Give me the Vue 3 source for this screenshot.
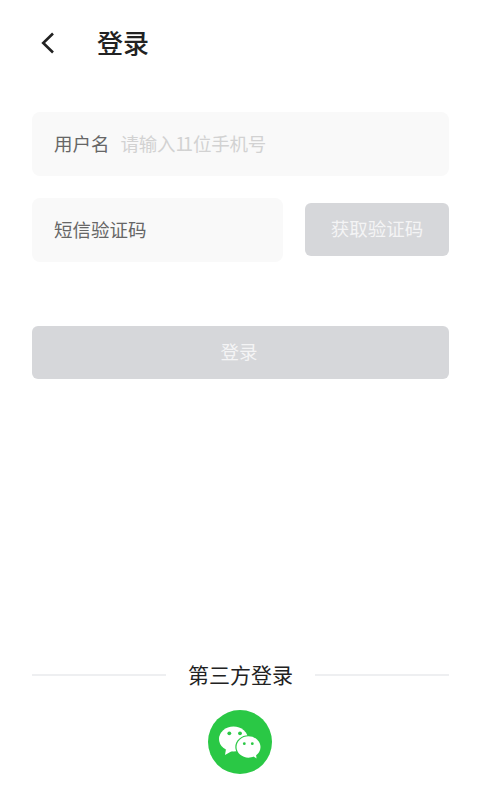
<script setup>
</script>

<template>
  <div class="page">
    <header class="nav">
      <svg class="back" width="16" height="24" viewBox="0 0 16 24" fill="none">
        <path d="M13 2.500 L3.200 12 L13 21.500" stroke="#222" stroke-width="2.600" />
      </svg>
      <h1 class="title">登录</h1>
    </header>

    <section class="form">
      <div class="field phone">
        <span class="label">用户名</span>
        <span class="placeholder">请输入<span class="digits">11</span>位手机号</span>
      </div>
      <div class="code-row">
        <div class="field code"><span class="label">短信验证码</span></div>
        <button class="btn send">获取验证码</button>
      </div>
      <button class="btn submit">登录</button>
    </section>

    <footer class="third">
      <div class="divider">
        <span class="line"></span>
        <span class="third-text">第三方登录</span>
        <span class="line"></span>
      </div>
      <div class="wechat">
        <svg width="64" height="64" viewBox="0 0 64 64">
          <circle cx="32" cy="32" r="32" fill="#2ac845" />
          <ellipse cx="25.500" cy="29" rx="14.500" ry="12.500" fill="#fff" />
          <path d="M18 39L17 45L24 41Z" fill="#fff" />
          <ellipse cx="40.500" cy="37" rx="13.200" ry="11.700" fill="#2ac845" />
          <ellipse cx="40.500" cy="37" rx="12" ry="10.700" fill="#fff" />
          <path d="M45 46L48.500 48.500L48 44Z" fill="#fff" />
          <circle cx="21.300" cy="23.300" r="1.900" fill="#2ac845" />
          <circle cx="32" cy="23.300" r="1.900" fill="#2ac845" />
          <circle cx="36.300" cy="33.700" r="1.400" fill="#2ac845" />
          <circle cx="44.300" cy="33.700" r="1.400" fill="#2ac845" />
        </svg>
      </div>
    </footer>
  </div>
</template>

<style>
html, body { margin: 0; background: #fff; }
</style>

<style scoped>
.page {
  width: 480px;
  height: 800px;
  box-sizing: border-box;
  padding: 0 31px 0 32px;
  display: flex;
  flex-direction: column;
  background: #fff;
  font-family: "Noto Sans CJK SC", "Liberation Sans", sans-serif;
  overflow: hidden;
}
.nav {
  height: 86px;
  display: flex;
  align-items: center;
  flex-shrink: 0;
}
.back { margin-left: 8px; flex-shrink: 0; }
.title {
  margin: 0 0 3px 41px;
  font-size: 26px;
  font-weight: 500;
  color: #222;
  line-height: 1;
}
.form {
  margin-top: 26px;
  display: flex;
  flex-direction: column;
}
.field {
  height: 64px;
  border-radius: 8px;
  background: #f9f9f9;
  display: flex;
  align-items: center;
  padding: 0 0 2px 22px;
  box-sizing: border-box;
}
.label { font-size: 18.500px; color: #666; line-height: 1; }
.placeholder { margin-left: 11px; font-size: 18.500px; color: #d2d2d2; line-height: 1; letter-spacing: -0.2px; }
.digits { letter-spacing: -3px; margin-right: 3px; }
.code-row {
  margin-top: 22px;
  display: flex;
  align-items: center;
  justify-content: space-between;
}
.code { width: 251px; }
.btn {
  border: 0;
  padding: 0 0 2px;
  height: 53px;
  border-radius: 6px;
  background: #d6d7da;
  color: #f4f4f5;
  font-family: inherit;
  font-size: 18.500px;
  line-height: 1;
}
.send { width: 144px; margin-bottom: 2px; }
.submit { margin-top: 64px; width: 100%; padding-right: 3px; }
.third {
  margin-top: auto;
  padding-bottom: 26px;
  display: flex;
  flex-direction: column;
  align-items: center;
}
.divider {
  width: 100%;
  display: flex;
  align-items: center;
  justify-content: space-between;
}
.line { width: 134px; height: 2px; background: #eeeff1; }
.third-text { font-size: 21px; color: #222; line-height: 1; }
.wechat { margin: 25px 1px 0 0; height: 64px; }
</style>
